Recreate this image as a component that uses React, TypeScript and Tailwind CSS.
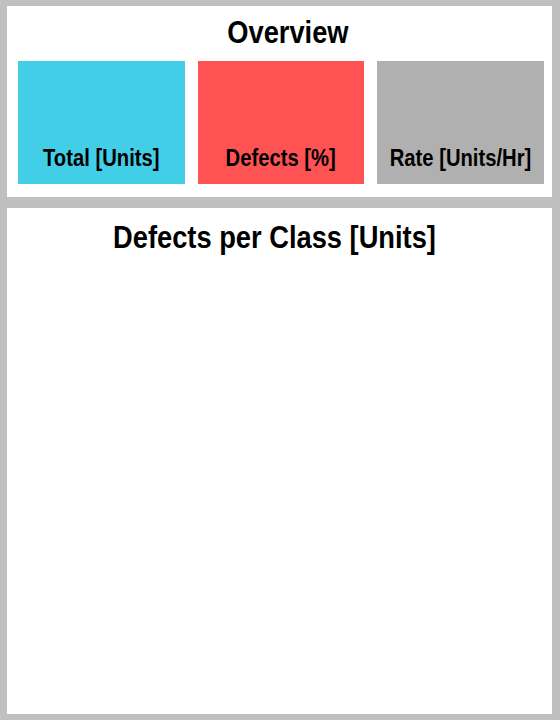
const font = { fontFamily: '"Liberation Sans Narrow", "Liberation Sans", Arial, sans-serif' };

function Tile({ label, className }: { label: string; className: string }) {
  return (
    <div className={`h-[123px] flex items-end justify-center pb-[14px] ${className}`}>
      <span className="inline-block scale-x-[0.88] whitespace-nowrap text-[23px] font-bold leading-none text-black">
        {label}
      </span>
    </div>
  );
}

export default function App() {
  return (
    <div
      className="w-[560px] h-[720px] bg-[#c0c0c0] pl-[7px] pr-[8px] pt-[6px] pb-[6px] flex flex-col gap-[11px]"
      style={font}
    >
      {/* Overview */}
      <section className="bg-white h-[191px] pl-[11px] pr-[8px] pt-[11px] flex flex-col">
        <h1 className="h-[44px] text-center pl-[14px]">
          <span className="inline-block scale-x-[0.88] text-[31px] font-bold leading-none text-black">Overview</span>
        </h1>
        <div className="grid grid-cols-3 gap-[13px]">
          <Tile label="Total [Units]" className="bg-[#41cee6]" />
          <Tile label="Defects [%]" className="bg-[#ff5353]" />
          <Tile label="Rate [Units/Hr]" className="bg-[#b0b0b0]" />
        </div>
      </section>

      {/* Chart */}
      <section className="bg-white flex-1 pt-[14px] pr-[11px] text-center">
        <h2 className="inline-block scale-x-[0.88] whitespace-nowrap text-[31px] font-bold leading-none text-black">
          Defects per Class [Units]
        </h2>
      </section>
    </div>
  );
}
